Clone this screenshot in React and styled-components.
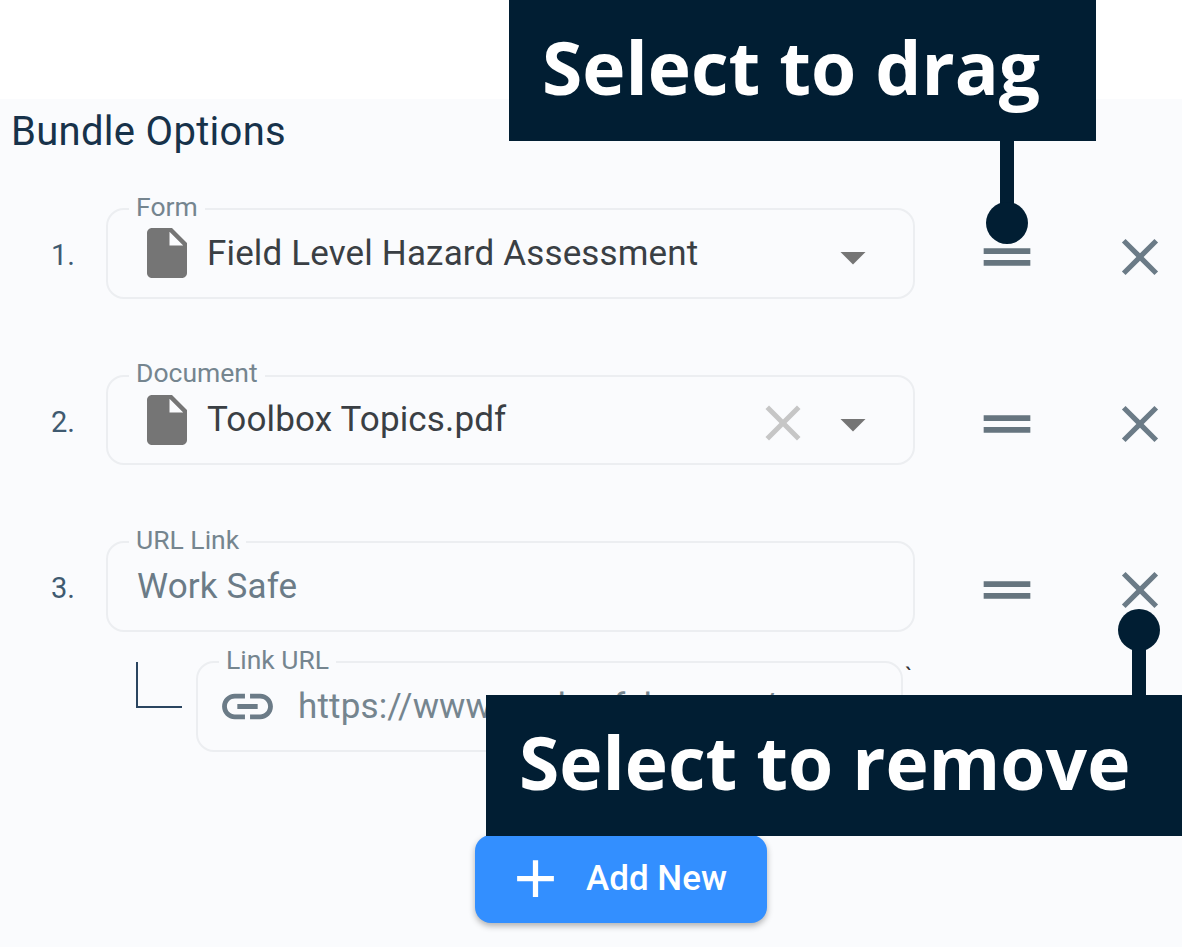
import React from 'react'
import styled, { createGlobalStyle } from 'styled-components'

const GlobalStyle = createGlobalStyle`
   html, body {
      margin: 0;
      padding: 0;
      background: #ffffff;
   }
`;

const ICONS = {
   file: 'M6 2c-1.1 0-1.99.9-1.99 2L4 20c0 1.1.89 2 1.99 2H18c1.1 0 2-.9 2-2V8l-6-6H6zm7 7V3.5L18.5 9H13z',
   close: 'M19 6.41L17.59 5 12 10.59 6.41 5 5 6.41 10.59 12 5 17.59 6.41 19 12 13.41 17.59 19 19 17.59 13.41 12z',
   arrow: 'M7 10l5 5 5-5z',
   drag: 'M20 9H4v2h16V9zM4 15h16v-2H4v2z',
   link: 'M3.9 12c0-1.71 1.39-3.1 3.1-3.1h4V7H7c-2.76 0-5 2.24-5 5s2.24 5 5 5h4v-1.9H7c-1.71 0-3.1-1.39-3.1-3.1zM8 13h8v-2H8v2zm9-6h-4v1.9h4c1.71 0 3.1 1.39 3.1 3.1s-1.39 3.1-3.1 3.1h-4V17h4c2.76 0 5-2.24 5-5s-2.24-5-5-5z',
   add: 'M19 13h-6v6h-2v-6H5v-2h6V5h2v6h6v2z',
};

const Icon = ({ name, size, color, drop }) => (
   <IconSvg viewBox="0 0 24 24" width={size} height={size} fill={color} $drop={drop}>
      <path d={ICONS[name]} />
   </IconSvg>
);

const Option = ({ num, label, icon, value, muted, clearable }) => (
   <Row>
      <Num>{num}</Num>
      <Field>
         <FieldLabel>{label}</FieldLabel>
         {icon && <Icon name={icon} size={60} color="#757575" />}
         <Value $muted={muted}>{value}</Value>
         {clearable && <Icon name="close" size={60} color="#c6c6c6" drop={6} />}
         {icon && <Icon name="arrow" size={60} color="#757575" drop={8} />}
      </Field>
      <Handle><Icon name="drag" size={70} color="#66757f" /></Handle>
      <Remove><Icon name="close" size={62} color="#6b7b87" /></Remove>
   </Row>
);

const App = () => (
   <Page>
      <GlobalStyle />
      <Panel>
         <Title>Bundle Options</Title>
         <Rows>
            <Option num="1." label="Form" icon="file" value="Field Level Hazard Assessment" />
            <Option num="2." label="Document" icon="file" value="Toolbox Topics.pdf" clearable />
            <div>
               <Option num="3." label="URL Link" value="Work Safe" muted />
               <SubRow>
                  <Corner />
                  <SubField>
                     <FieldLabel>Link URL</FieldLabel>
                     <Icon name="link" size={61} color="#6b7b87" />
                     <SubValue>https://www.worksafebc.com/</SubValue>
                  </SubField>
               </SubRow>
            </div>
         </Rows>
         <AddRow>
            <AddButton>
               <Icon name="add" size={63} color="#ffffff" />
               <AddText>Add New</AddText>
            </AddButton>
         </AddRow>
      </Panel>
      <Tick>`</Tick>
      <DragCallout>
         Select to drag
         <Stem $side="bottom" />
         <Dot $side="bottom" />
      </DragCallout>
      <RemoveCallout>
         Select to remove
         <Stem $side="top" />
         <Dot $side="top" />
      </RemoveCallout>
   </Page>
);

const Page = styled.div`
   position: relative;
   width: 1182px;
   height: 947px;
   padding-top: 99px;
   box-sizing: border-box;
   overflow: hidden;
   font-family: Roboto, "Liberation Sans", sans-serif;
`;

const Panel = styled.div`
   height: 848px;
   padding-top: 9px;
   box-sizing: border-box;
   background: #fafbfd;
`;

const IconSvg = styled.svg`
   display: block;
   flex: none;
   margin-top: ${props => props.$drop ? props.$drop + "px" : "0"};
`;

const Title = styled.h2`
   margin: 0 0 0 11px;
   font-size: 40px;
   font-weight: 400;
   line-height: 48px;
   letter-spacing: 0.3px;
   color: #17324a;
`;

const Rows = styled.div`
   display: flex;
   flex-direction: column;
   gap: 76px;
   margin-top: 52px;
`;

const Row = styled.div`
   display: grid;
   grid-template-columns: 106px 809px 184px 83px;
   align-items: center;
   height: 90.5px;
`;

const Num = styled.span`
   padding-left: 51px;
   padding-top: 4px;
   font-size: 29px;
   color: #3f5a70;
`;

const Field = styled.div`
   position: relative;
   display: flex;
   align-items: center;
   gap: 10px;
   height: 90.5px;
   padding: 0 30px 0 29px;
   box-sizing: border-box;
   border: 2px solid #eceef1;
   border-radius: 18px;
`;

const FieldLabel = styled.label`
   position: absolute;
   top: -18.5px;
   left: 21px;
   padding: 0 7px;
   font-size: 26.5px;
   line-height: 30px;
   color: #75858f;
   background: #fafbfd;
`;

const Value = styled.span`
   flex: 1;
   font-size: 35px;
   letter-spacing: 0.15px;
   color: ${props => props.$muted ? "#6b7b87" : "#3a3f44"};
`;

const Handle = styled.div`
   display: flex;
   justify-content: center;
   padding-top: 8px;
`;

const Remove = styled.div`
   display: flex;
   padding-left: 10px;
   padding-top: 8px;
`;

const SubRow = styled.div`
   display: flex;
   align-items: flex-start;
   margin: 29.5px 0 0 136px;
`;

const Corner = styled.div`
   width: 44px;
   height: 44px;
   margin-top: 1px;
   border-left: 2px solid #2a4560;
   border-bottom: 2px solid #2a4560;
`;

const SubField = styled(Field)`
   width: 707px;
   margin-left: 14px;
   padding: 0 19px;
   gap: 20px;
`;

const SubValue = styled.span`
   font-size: 35px;
   letter-spacing: 0.15px;
   color: #75858f;
   white-space: nowrap;
`;

const AddRow = styled.div`
   display: flex;
   justify-content: flex-start;
   margin: 83.5px 0 0 475px;
`;

const AddButton = styled.button`
   display: flex;
   align-items: center;
   width: 292px;
   height: 88px;
   padding: 0 0 2px 29px;
   box-sizing: border-box;
   background: #338fff;
   border: none;
   border-radius: 16px;
   box-shadow: 0 3px 6px rgba(0, 0, 0, 0.3);
`;

const AddText = styled.span`
   margin-left: 19px;
   font-family: Roboto, sans-serif;
   font-size: 35px;
   font-weight: 500;
   color: #ffffff;
`;

const Tick = styled.span`
   position: absolute;
   left: 905px;
   top: 663px;
   font-size: 24px;
   color: #333333;
`;

const Callout = styled.div`
   position: absolute;
   box-sizing: border-box;
   height: 141px;
   font-family: "Open Sans", sans-serif;
   font-size: 73.1px;
   font-weight: 700;
   line-height: 134px;
   white-space: nowrap;
   color: #ffffff;
   background: #011e33;
`;

const DragCallout = styled(Callout)`
   top: 0;
   left: 509px;
   width: 587px;
   padding-left: 33px;
`;

const RemoveCallout = styled(Callout)`
   top: 695px;
   left: 486px;
   width: 696px;
   padding-left: 33px;
`;

const Stem = styled.span`
   position: absolute;
   width: 14px;
   height: 66px;
   background: #011e33;
   ${props => props.$side === "bottom" ? "left: 491px; top: 141px;" : "left: 646px; bottom: 141px;"}
`;

const Dot = styled.span`
   position: absolute;
   width: 42px;
   height: 42px;
   border-radius: 50%;
   background: #011e33;
   ${props => props.$side === "bottom" ? "left: 477px; top: 202px;" : "left: 632px; top: -87px; margin-top: 1px;"}
`;

export default App
